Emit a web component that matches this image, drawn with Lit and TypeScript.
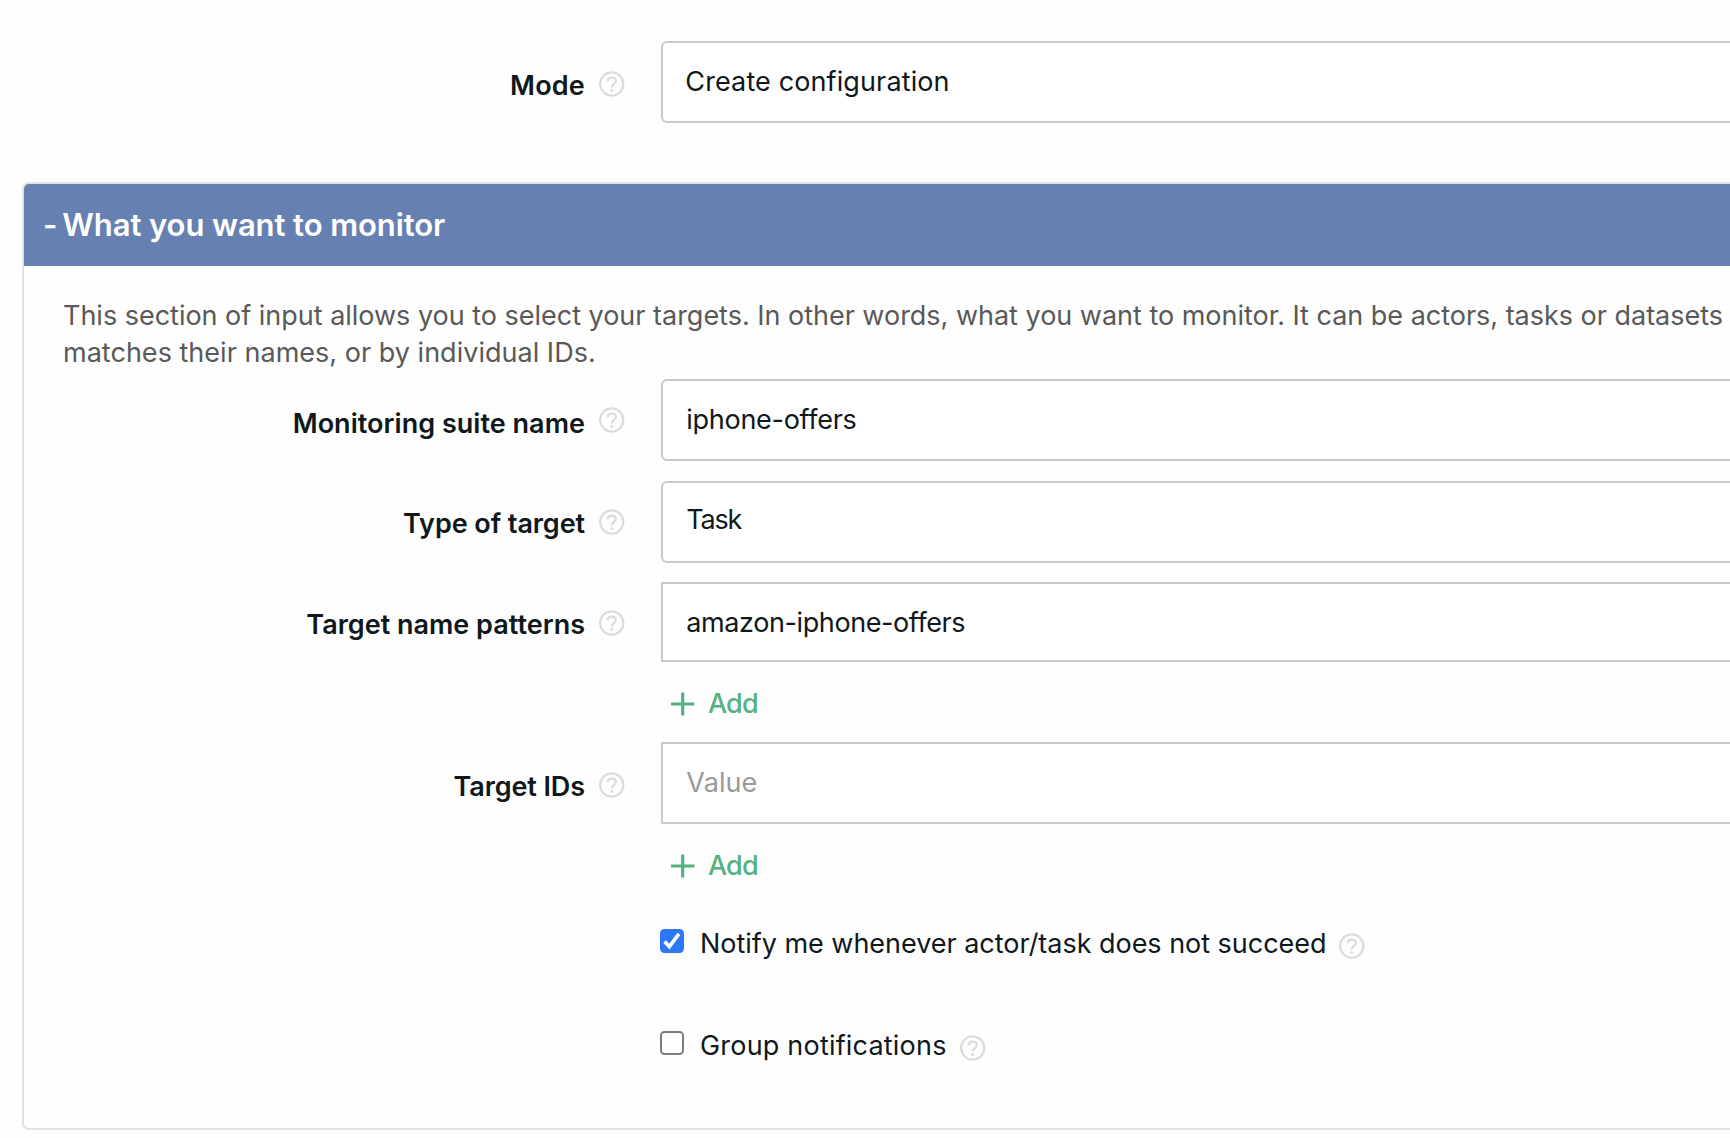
import { LitElement, html, css, svg } from "lit";
import { customElement, property } from "lit/decorators.js";

@customElement("help-icon")
class HelpIcon extends LitElement {
  static styles = css`
    :host { display: block; width: 26px; height: 26px; flex: none; }
    svg { display: block; }
  `;
  render() {
    return html`<svg width="26" height="26" viewBox="0 0 26 26" fill="none" stroke="#dcdcdc" stroke-width="2.3">
      <circle cx="12.7" cy="13" r="11.6"></circle>
      <path d="M8.6 10.3C8.6 7.9 10.4 6.6 12.7 6.6s4.1 1.4 4.1 3.5c0 1.6-.9 2.4-2.1 3.2-1.3.9-2 1.4-2 3.1"></path>
      <circle cx="12.7" cy="19.5" r="1.6" fill="#dcdcdc" stroke="none"></circle>
    </svg>`;
  }
}

@customElement("add-button")
class AddButton extends LitElement {
  static styles = css`
    button {
      display: flex; align-items: center; gap: 13px; height: 33px; padding: 0 0 0 10px;
      border: 0; background: none; color: #55b181;
      font: 500 27px/33px Inter, "Liberation Sans", sans-serif; letter-spacing: -0.85px;
    }
    svg { display: block; }
  `;
  render() {
    return html`<button type="button">
      <svg width="24" height="24" viewBox="0 0 24 24" stroke="#55b181" stroke-width="3.2">
        ${svg`<path d="M11.7 .5v23M0 12h23.4"></path>`}
      </svg>Add</button>`;
  }
}

@customElement("form-row")
class FormRow extends LitElement {
  @property() label = "";
  @property() value = "";
  static styles = css`
    :host {
      display: grid; grid-template-columns: 585px 26px 1fr; column-gap: 14px;
      color: #10181c; font: 400 27px/32px Inter, "Liberation Sans", sans-serif;
    }
    .label {
      text-align: right; font-weight: 600; white-space: nowrap;
      padding-top: var(--label-top, 27px); letter-spacing: var(--label-spacing, 0);
    }
    help-icon { margin-top: var(--icon-top, 28px); }
    .field {
      box-sizing: border-box; height: var(--field-height, 82px); margin-left: 22px;
      border: 2px solid #cacaca; border-radius: var(--field-radius, 6px); background: #fff;
      padding: var(--text-top, 22px) 0 0 var(--text-left, 23.3px);
      letter-spacing: var(--text-spacing, 0);
      color: var(--text-color, #10181c); white-space: nowrap;
    }
  `;
  render() {
    return html`
      <div class="label">${this.label}</div>
      <help-icon></help-icon>
      <div class="field">${this.value}</div>
    `;
  }
}

@customElement("check-row")
class CheckRow extends LitElement {
  @property() label = "";
  @property({ type: Boolean }) checked = false;
  static styles = css`
    :host {
      display: flex; align-items: center; height: 41px; color: #10181c; white-space: nowrap;
      font: 400 27px/33px Inter, "Liberation Sans", sans-serif;
    }
    .box {
      box-sizing: border-box; width: 24px; height: 24px; margin: 0 16px 5px 0;
      border: 2px solid #7d7d7d; border-radius: 4.5px; background: #fff;
    }
    .box.on { border: 0; background: #2d78f6; }
    .box svg { display: block; }
    .text { letter-spacing: var(--text-spacing, -0.03px); }
    help-icon { margin: 5px 0 0 13px; }
  `;
  render() {
    return html`
      <div class="box ${this.checked ? "on" : ""}" role="checkbox" aria-checked=${this.checked}>
        ${this.checked
          ? html`<svg width="24" height="24" viewBox="0 0 24 24" fill="none" stroke="#fff" stroke-width="3.6">
              <path d="M4.6 12.6l4.7 5L19 4.8"></path>
            </svg>`
          : ""}
      </div>
      <span class="text">${this.label}</span>
      <help-icon></help-icon>
    `;
  }
}

@customElement("app-root")
class AppRoot extends LitElement {
  static styles = css`
    :host {
      display: block; box-sizing: border-box; width: 1730px; height: 1138px; overflow: hidden;
      background: #fefefe; padding-top: 41px;
      font-family: Inter, "Liberation Sans", sans-serif;
    }
    .page { width: 1780px; }
    .mode {
      --label-top: 29px; --label-spacing: 0.2px; --icon-top: 30px;
      --text-top: 23px; --text-left: 22.3px; --text-spacing: 0.12px;
    }
    .panel {
      box-sizing: border-box; height: 948px; margin: 59px 0 0 22px;
      border: 2px solid #e0e0e0; border-radius: 7px; overflow: hidden;
    }
    .header {
      height: 82px; box-sizing: border-box; padding: 21.5px 0 0 19px;
      background: #6681b1; color: #fff;
      font-size: 31px; line-height: 38px; font-weight: 600; letter-spacing: -0.08px;
    }
    .dash { letter-spacing: -1.5px; }
    .description {
      margin: 31px 0 8px 39px; color: #595959; font-size: 27px; line-height: 37px;
      white-space: nowrap;
    }
    .line { display: block; letter-spacing: -0.016px; }
    .line.second { letter-spacing: 0.02px; }
    .fields { display: flex; flex-direction: column; margin-left: -24px; }
    .suite { --label-top: 29px; --label-spacing: 0.03px; --text-spacing: -0.28px; --text-top: 22.5px; }
    .type {
      margin-top: 19.5px; --label-top: 27px; --label-spacing: -0.08px;
      --text-spacing: -1.2px; --text-top: 21px;
    }
    .patterns {
      margin-top: 19.5px; --field-height: 80px; --field-radius: 0; --label-top: 27px;
      --text-spacing: -0.4px; --text-top: 23px;
    }
    .ids {
      margin-top: 23px; --field-height: 82px; --field-radius: 0; --label-top: 29px;
      --label-spacing: -0.1px; --icon-top: 30px; --text-spacing: 0.1px; --text-top: 23px;
      --text-color: #999;
    }
    add-button { margin: 25px 0 0 661px; }
    .patterns + add-button + .ids { margin-top: 22px; }
    .ids + add-button { margin-top: 25px; }
    check-row { margin: 40.5px 0 0 660px; }
    check-row + check-row { margin-top: 61px; --text-spacing: 0.2px; }
  `;
  render() {
    return html`
      <div class="page">
        <form-row class="mode" label="Mode" value="Create configuration"></form-row>
        <section class="panel">
          <div class="header"><span class="dash">- </span>What you want to monitor</div>
          <div class="description">
            <span class="line">This section of input allows you to select your targets. In other words, what you want to monitor. It can be actors, tasks or datasets a</span>
            <span class="line second">matches their names, or by individual IDs.</span>
          </div>
          <div class="fields">
            <form-row class="suite" label="Monitoring suite name" value="iphone-offers"></form-row>
            <form-row class="type" label="Type of target" value="Task"></form-row>
            <form-row class="patterns" label="Target name patterns" value="amazon-iphone-offers"></form-row>
            <add-button></add-button>
            <form-row class="ids" label="Target IDs" value="Value"></form-row>
            <add-button></add-button>
            <check-row label="Notify me whenever actor/task does not succeed" checked></check-row>
            <check-row label="Group notifications"></check-row>
          </div>
        </section>
      </div>
    `;
  }
}
